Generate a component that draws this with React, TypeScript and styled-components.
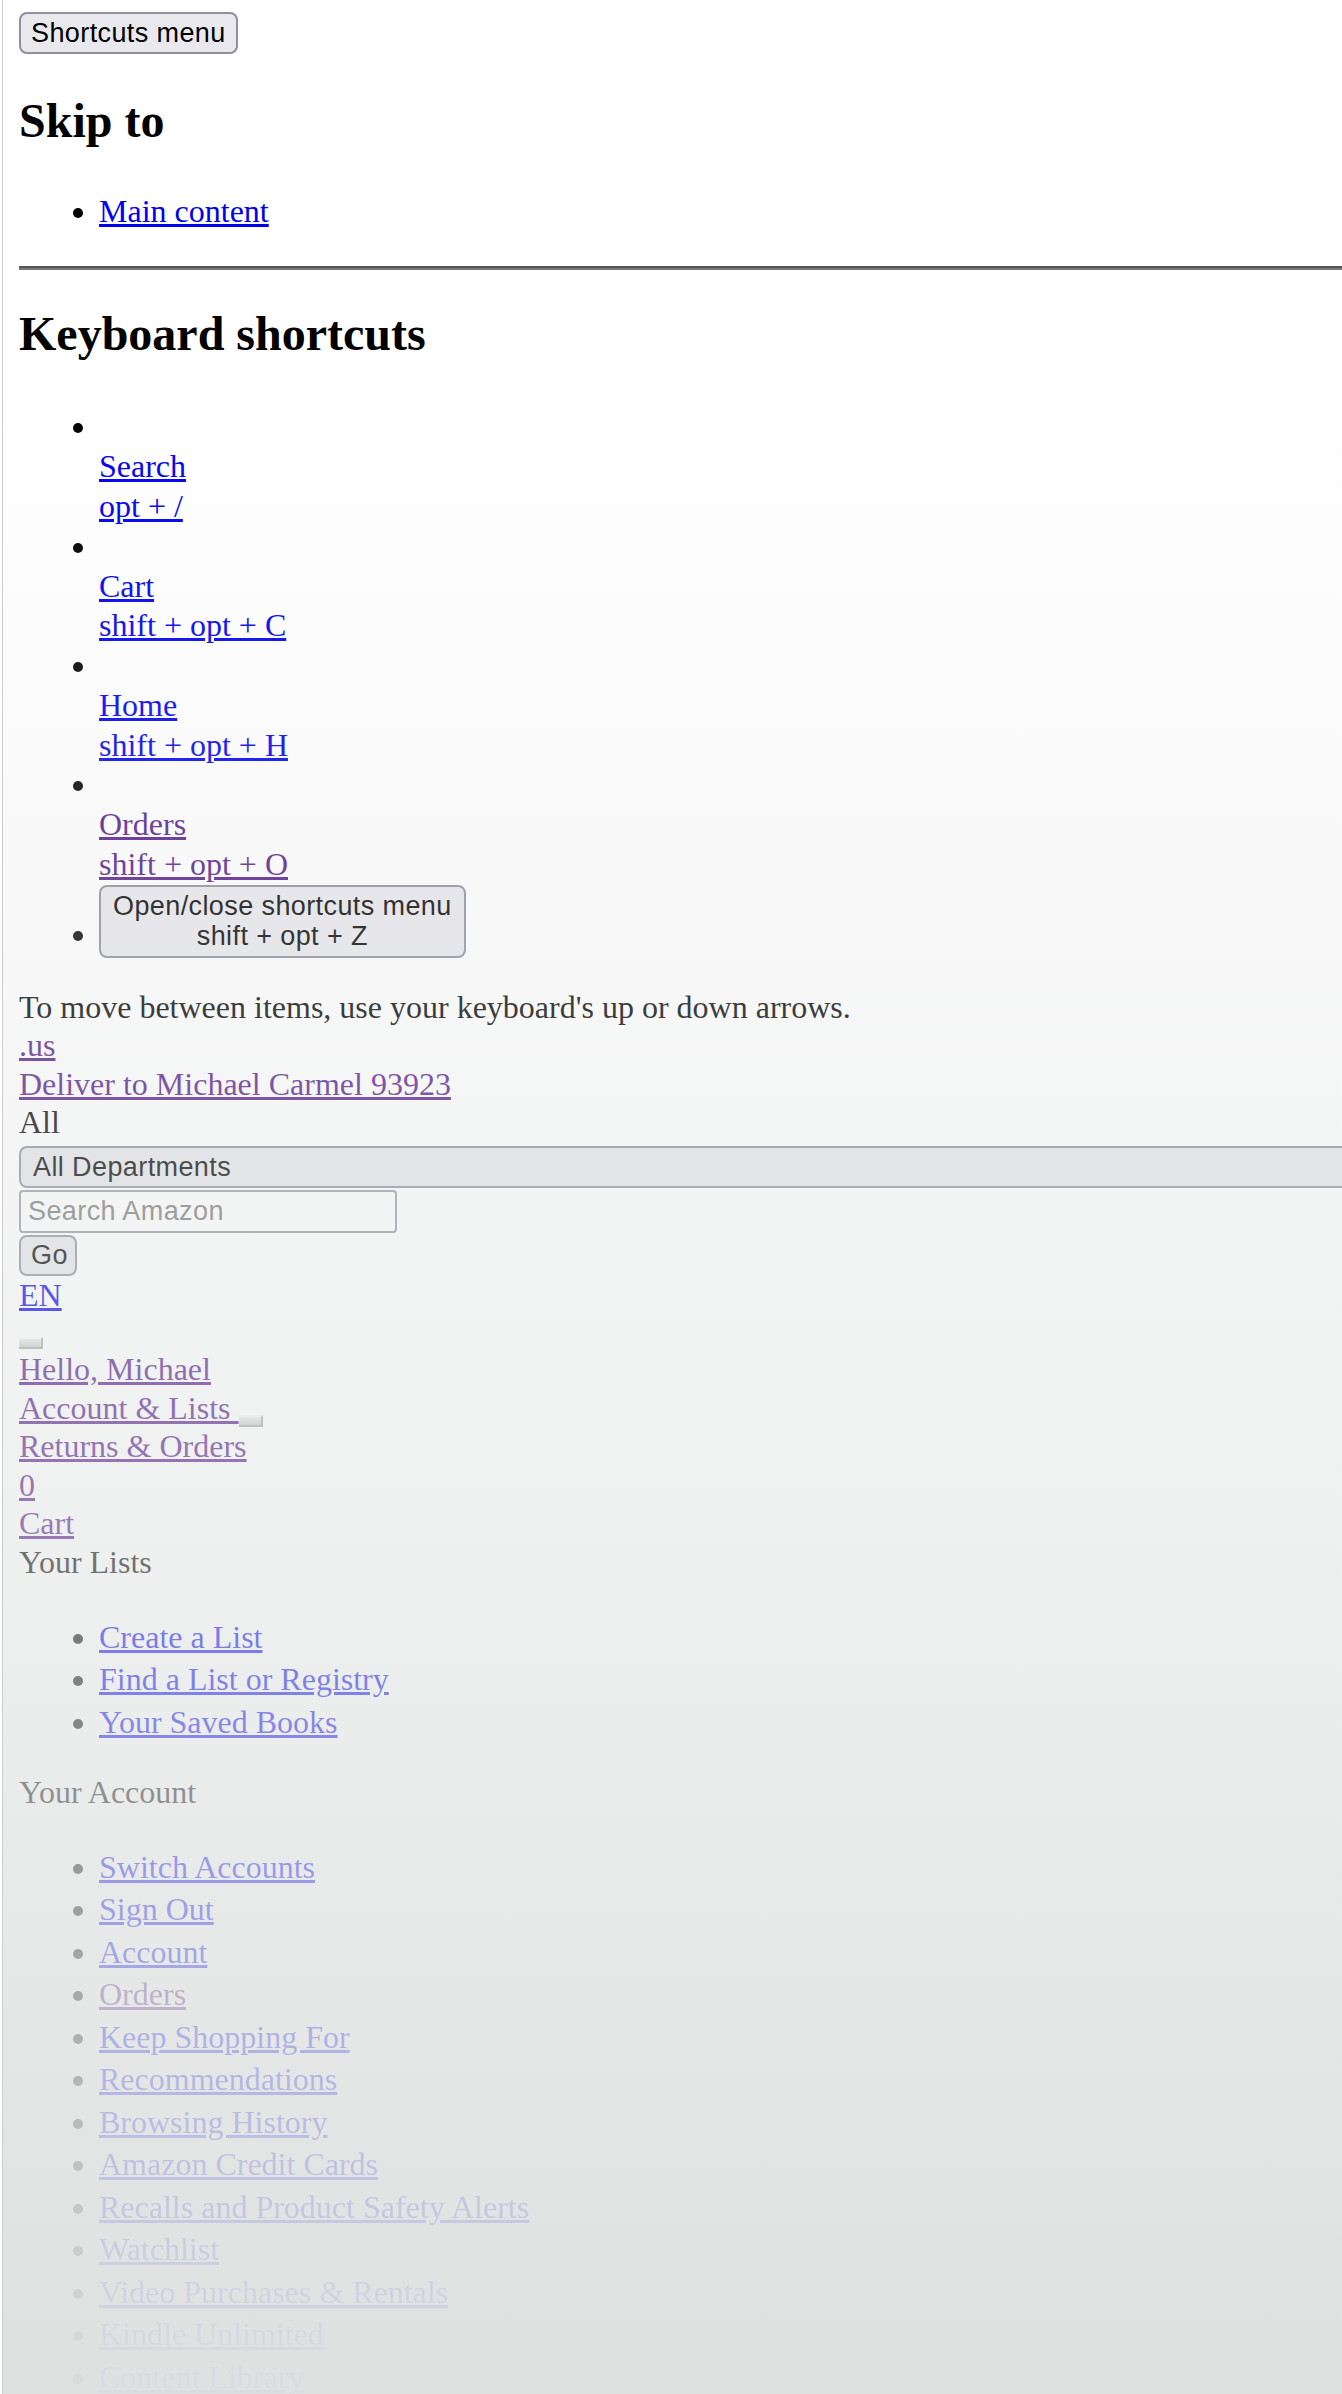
import React from "react";
import styled, { createGlobalStyle } from "styled-components";

const GlobalStyle = createGlobalStyle`
  html, body {
    margin: 0;
    padding: 0;
    background: #fff;
  }
  body {
    font-family: "Liberation Serif", "Times New Roman", serif;
    font-size: 32px;
    color: #000;
  }
`;

const shortcuts = [
  { label: "Search", keys: "opt + /", visited: false },
  { label: "Cart", keys: "shift + opt + C", visited: false },
  { label: "Home", keys: "shift + opt + H", visited: false },
  { label: "Orders", keys: "shift + opt + O", visited: true },
];

const yourLists = ["Create a List", "Find a List or Registry", "Your Saved Books"];

const yourAccount = [
  { label: "Switch Accounts" },
  { label: "Sign Out" },
  { label: "Account" },
  { label: "Orders", visited: true },
  { label: "Keep Shopping For" },
  { label: "Recommendations" },
  { label: "Browsing History" },
  { label: "Amazon Credit Cards" },
  { label: "Recalls and Product Safety Alerts" },
  { label: "Watchlist" },
  { label: "Video Purchases & Rentals" },
  { label: "Kindle Unlimited" },
  { label: "Content Library" },
  { label: "Devices" },
];

const App: React.FC = () => {
  return (
    <>
      <GlobalStyle />
      <Page>
        <NativeButton type="button">Shortcuts menu</NativeButton>

        <SectionTitle $top={39.3}>Skip to</SectionTitle>
        <PlainList $top={43.7} $line={38.5}>
          <li>
            <Link href="#main">Main content</Link>
          </li>
        </PlainList>

        <Rule />

        <SectionTitle $top={35.8}>Keyboard shortcuts</SectionTitle>
        <PlainList $top={46.2} $line={39.77}>
          {shortcuts.map((s) => (
            <li key={s.label}>
              <IconSlot aria-hidden>{"\u00a0"}</IconSlot>
              <ShortcutLink href="#" $visited={s.visited}>
                <div>{s.label}</div>
                <div>{s.keys}</div>
              </ShortcutLink>
            </li>
          ))}
          <li>
            <ToggleButton type="button">
              Open/close shortcuts menu
              <br />
              shift + opt + Z
            </ToggleButton>
          </li>
        </PlainList>

        <TextLine $top={30}>To move between items, use your keyboard's up or down arrows.</TextLine>
        <TextLine>
          <Link href="#" $visited>.us</Link>
        </TextLine>
        <TextLine>
          <Link href="#" $visited>Deliver to Michael Carmel 93923</Link>
        </TextLine>
        <TextLine>All</TextLine>

        <DeptSelect defaultValue="all">
          <option value="all">All Departments</option>
        </DeptSelect>
        <SearchInput type="text" placeholder="Search Amazon" />
        <GoButton type="button">Go</GoButton>

        <TextLine>
          <Link href="#">EN</Link>
        </TextLine>
        <TinyRow>
          <TinyButton type="button" aria-label="Open menu" />
        </TinyRow>
        <TextLine>
          <Link href="#" $visited>Hello, Michael</Link>
        </TextLine>
        <TextLine>
          <Link href="#" $visited>
            Account &amp; Lists <InlineTiny type="button" aria-label="Expand" />
          </Link>
        </TextLine>
        <TextLine>
          <Link href="#" $visited>Returns &amp; Orders</Link>
        </TextLine>
        <TextLine>
          <Link href="#" $visited>0</Link>
        </TextLine>
        <TextLine>
          <Link href="#" $visited>Cart</Link>
        </TextLine>
        <TextLine>Your Lists</TextLine>

        <PlainList $top={34.3} $line={42.5}>
          {yourLists.map((l) => (
            <li key={l}>
              <Link href="#">{l}</Link>
            </li>
          ))}
        </PlainList>

        <TextLine $top={29.5}>Your Account</TextLine>

        <PlainList $top={34.5} $line={42.5}>
          {yourAccount.map((a) => (
            <li key={a.label}>
              <Link href="#" $visited={a.visited}>{a.label}</Link>
            </li>
          ))}
        </PlainList>

        <Fade />
      </Page>
    </>
  );
};

export default App;

const Page = styled.div`
  position: relative;
  box-sizing: border-box;
  height: 2394px;
  overflow: hidden;
  margin-left: 2px;
  border-left: 1px solid #cdcdcd;
  padding: 12px 0 0 16px;
`;

const Fade = styled.div`
  position: absolute;
  inset: 0;
  pointer-events: none;
  background: linear-gradient(
    to bottom,
    rgba(222, 224, 224, 0) 0px,
    rgba(222, 224, 224, 0) 390px,
    rgba(222, 224, 224, 0.27) 1019px,
    rgba(222, 224, 224, 0.51) 1573px,
    rgba(222, 224, 224, 0.97) 2345px,
    rgba(222, 224, 224, 0.98) 2394px
  );
`;

const NativeButton = styled.button`
  display: block;
  box-sizing: border-box;
  height: 42px;
  margin: 0;
  padding: 0 10px;
  font-family: "Liberation Sans", Arial, sans-serif;
  font-size: 27px;
  letter-spacing: 0.4px;
  line-height: 30.4px;
  color: #000;
  background: #e9e9ed;
  border: 2px solid #8f8f9d;
  border-radius: 8px;
`;

const ToggleButton = styled(NativeButton)`
  display: inline-block;
  height: 73px;
  padding: 4px 12px;
  text-align: center;
  vertical-align: baseline;
`;

const SectionTitle = styled.h2<{ $top: number }>`
  margin: ${(p) => p.$top}px 0 0;
  font-size: 48px;
  line-height: 55px;
  font-weight: bold;
`;

const PlainList = styled.ul<{ $top: number; $line: number }>`
  margin: ${(p) => p.$top}px 0 0;
  padding-left: 80px;
  list-style: disc;
  line-height: ${(p) => p.$line}px;
`;

const Rule = styled.hr`
  margin: 36px 0 0;
  height: 4px;
  border: 0;
  background: linear-gradient(#555 0 2px, #787878 2px 4px);
`;

const IconSlot = styled.div`
  height: 39.77px;
`;

const Link = styled.a<{ $visited?: boolean }>`
  color: ${(p) => (p.$visited ? "#551a8b" : "#0000ee")};
  text-decoration: underline;
`;

const ShortcutLink = styled(Link)`
  display: block;
`;

const TextLine = styled.div<{ $top?: number }>`
  margin-top: ${(p) => p.$top ?? 0}px;
  line-height: 38.5px;
  white-space: nowrap;
`;

const DeptSelect = styled.select`
  display: block;
  appearance: none;
  box-sizing: border-box;
  width: 1400px;
  height: 42px;
  margin: 4px 0 0;
  padding: 0 12px;
  font-family: "Liberation Sans", Arial, sans-serif;
  font-size: 27px;
  letter-spacing: 0.4px;
  color: #000;
  background: #e6e6ea;
  border: 2px solid #8f8f9d;
  border-radius: 8px;
`;

const SearchInput = styled.input`
  display: block;
  box-sizing: border-box;
  width: 378px;
  height: 43px;
  margin: 2px 0 0;
  padding: 0 7px;
  font-family: "Liberation Sans", Arial, sans-serif;
  font-size: 27px;
  letter-spacing: 0.4px;
  color: #000;
  background: #fff;
  border: 2px solid #9a9aa2;
  border-radius: 4px;

  &::placeholder {
    color: #7a7a7a;
  }
`;

const GoButton = styled(NativeButton)`
  height: 41px;
  width: 58px;
  margin-top: 2px;
  padding: 0 10px;
  background: #e6e6ea;
`;

const TinyRow = styled.div`
  box-sizing: border-box;
  height: 36.2px;
  padding-top: 22.5px;
`;

const TinyButton = styled.button`
  display: block;
  box-sizing: border-box;
  width: 24px;
  height: 12px;
  margin: 0;
  padding: 0;
  background: linear-gradient(#ececec, #c9c9c9);
  border-style: solid;
  border-width: 2px 2px 2px 0;
  border-color: #f8f8f8 #a9a9a9 #a9a9a9 #d0d0d0;
  border-radius: 0;
`;

const InlineTiny = styled(TinyButton)`
  display: inline-block;
  vertical-align: -6px;
`;
